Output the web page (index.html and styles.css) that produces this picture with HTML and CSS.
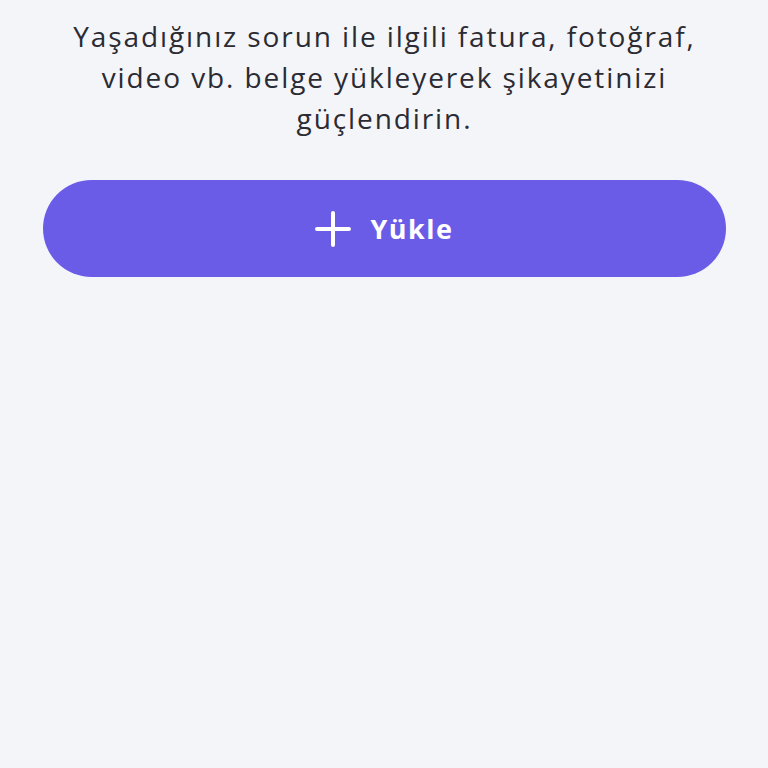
FILE: index.html
```html
<!DOCTYPE html>
<html lang="tr">
<head>
  <meta charset="UTF-8">
  <meta name="viewport" content="width=device-width, initial-scale=1.0">
  <title>Belge Yükle</title>
  <link rel="stylesheet" href="styles.css">
</head>
<body>
  <div class="container">
    <p class="info">Yaşadığınız sorun ile ilgili fatura, fotoğraf, video vb. belge yükleyerek şikayetinizi güçlendirin.</p>

    <!-- yükleme butonu -->
    <button class="upload-btn" type="button">
      <svg class="plus" width="36" height="36" viewBox="0 0 36 36" aria-hidden="true">
        <path d="M18 2 V34 M2 18 H34" stroke="#fff" stroke-width="4" stroke-linecap="round" fill="none"/>
      </svg>
      <span>Yükle</span>
    </button>
  </div>
</body>
</html>
```

FILE: styles.css
```css
html, body {
  margin: 0;
  padding: 0;
  background-color: #f4f5f9;
}
body {
  font-family: "Open Sans", "Noto Sans", sans-serif;
  color: #2b2b33;
}
.container {
  padding: 16px 42px 0 43px;
}
.info {
  margin: 0;
  padding: 0 28px;
  text-align: center;
  font-size: 28px;
  line-height: 41px;
  letter-spacing: 1.9px;
}
.upload-btn {
  display: flex;
  align-items: center;
  justify-content: center;
  gap: 19px;
  width: 100%;
  height: 97px;
  margin-top: 41px;
  border: none;
  border-radius: 49px;
  background-color: #6b5ce7;
  color: #fff;
  font-family: "Open Sans", "Noto Sans", sans-serif;
  font-size: 27px;
  font-weight: bold;
  letter-spacing: 1.5px;
  cursor: pointer;
}
.upload-btn:hover {
  background-color: #5a4bd6;
}
.plus {
  display: block;
}
```
